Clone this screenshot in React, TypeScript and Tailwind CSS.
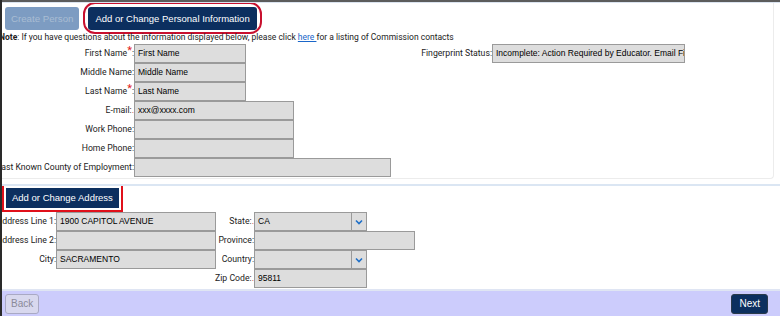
import React from 'react'

const labelFont = "font-['Roboto',sans-serif] text-[8.7px] text-[#222]"
const inputFont = "font-['Liberation_Sans',Arial,sans-serif] text-[8.5px] text-black"

function Req({ small }: { small?: boolean }) {
  if (small) return <span className="text-[#e02020] text-[9px] leading-none">.</span>
  return <span className="text-[#e02020] text-[11px] leading-none relative top-[-2px]">*</span>
}

function Field({
  value,
  width,
}: {
  value?: string
  width: string
}) {
  return (
    <div
      className={`${width} h-[19px] shrink-0 border border-[#9a9a9a] bg-[#dddddd] flex items-center px-[3px] overflow-hidden whitespace-nowrap ${inputFont}`}
    >
      {value}
    </div>
  )
}

function Select({ value }: { value?: string }) {
  return (
    <div className="w-[113px] h-[19px] shrink-0 border border-[#9a9a9a] bg-[#dddddd] flex items-stretch">
      <div className={`flex-1 flex items-center px-[3px] ${inputFont}`}>{value}</div>
      <div className="w-[15px] border-l border-[#9a9a9a] flex items-center justify-center">
        <svg width="8" height="6" viewBox="0 0 8 6">
          <path d="M1 1.5 L4 4.5 L7 1.5" fill="none" stroke="#1e6fc8" strokeWidth="1.6" />
        </svg>
      </div>
    </div>
  )
}

function Row({
  label,
  labelWidth,
  children,
  req,
}: {
  label: string
  labelWidth: string
  children: React.ReactNode
  req?: 'star' | 'dot'
}) {
  return (
    <div className="flex items-center h-[19px]">
      <div className={`${labelWidth} shrink-0 flex justify-end items-center whitespace-nowrap ${labelFont}`}>
        <span className="shrink-0">
          {label}
          {req === 'star' && <Req />}
          {req === 'dot' && <Req small />}
          {req !== 'dot' && ':'}
        </span>
      </div>
      {children}
    </div>
  )
}

export default function App() {
  return (
    <div className="w-[780px] h-[316px] bg-white border-l-2 border-[#2a2a2a] flex flex-col overflow-hidden">
      <div className="h-[2px] bg-[#5c5c5c] shrink-0" />
      <div className="h-[1px] bg-[#dbe4f0] shrink-0" />

      {/* personal info card */}
      <div className="w-[772px] h-[176px] shrink-0 border-r border-b border-[#ececec] rounded-br-[4px] overflow-hidden">
        <div className="flex items-center gap-[4px] pl-[3px] pt-[4px]">
          <button className="h-[23px] px-[6px] rounded-[3px] bg-[#7d9cc2] text-[#a9bcd3] font-['Liberation_Sans',Arial,sans-serif] text-[9.7px] leading-none">
            Create Person
          </button>
          <div className="flex rounded-[12px] border-2 border-[#c8102e] px-[3px] pt-[3px] pb-[2px] -mt-[5px] -mb-[4px]">
            <button className="h-[23px] px-[7px] rounded-[3px] bg-[#0c2f5f] text-white font-['Liberation_Sans',Arial,sans-serif] text-[9.5px] leading-none">
              Add or Change Personal Information
            </button>
          </div>
        </div>

        <div className="-ml-[3px] mt-[2px] whitespace-nowrap font-['Roboto',sans-serif] text-[8.5px] leading-[11px] text-[#222]">
          <b>Note</b>: If you have questions about the information displayed below, please click{' '}
          <span className="text-[#1a66c9] underline">here </span>for a listing of Commission contacts
        </div>

        <div className="flex mt-[1px]">
          <div className="flex flex-col">
            <Row label="First Name" labelWidth="w-[132px]" req="star">
              <Field width="w-[112px]" value="First Name" />
            </Row>
            <Row label="Middle Name" labelWidth="w-[132px]">
              <Field width="w-[112px]" value="Middle Name" />
            </Row>
            <Row label="Last Name" labelWidth="w-[132px]" req="star">
              <Field width="w-[112px]" value="Last Name" />
            </Row>
            <Row label="E-mail:" labelWidth="w-[132px]" req="dot">
              <Field width="w-[160px]" value="xxx@xxxx.com" />
            </Row>
            <Row label="Work Phone" labelWidth="w-[132px]">
              <Field width="w-[160px]" />
            </Row>
            <Row label="Home Phone" labelWidth="w-[132px]">
              <Field width="w-[160px]" />
            </Row>
            <Row label="Last Known County of Employment" labelWidth="w-[132px]">
              <Field width="w-[257px]" />
            </Row>
          </div>
          <div className="flex flex-col">
            <Row label="Fingerprint Status" labelWidth="w-[101px]">
              <Field width="w-[193px]" value="Incomplete: Action Required by Educator. Email Fingerprint Unit" />
            </Row>
          </div>
        </div>
      </div>

      <div className="h-[5px] shrink-0" />
      <div className="h-[2px] bg-[#dbe6f3] shrink-0" />

      {/* address section */}
      <div className="flex-1 flex flex-col overflow-hidden">
        <div className="flex -mt-[2px]">
          <div className="flex border-2 border-[#e0101a] p-[2px]">
            <button className="h-[20px] px-[6px] bg-[#0c2f5f] text-white font-['Liberation_Sans',Arial,sans-serif] text-[9.5px] leading-none">
              Add or Change Address
            </button>
          </div>
        </div>

        <div className="flex">
          <div className="flex flex-col">
            <Row label="Address Line 1" labelWidth="w-[54px]">
              <Field width="w-[160px]" value="1900 CAPITOL AVENUE" />
            </Row>
            <Row label="Address Line 2" labelWidth="w-[54px]">
              <Field width="w-[160px]" />
            </Row>
            <Row label="City" labelWidth="w-[54px]">
              <Field width="w-[160px]" value="SACRAMENTO" />
            </Row>
          </div>
          <div className="flex flex-col">
            <Row label="State:" labelWidth="w-[38px]" req="dot">
              <Select value="CA" />
            </Row>
            <Row label="Province" labelWidth="w-[38px]">
              <Field width="w-[161px]" />
            </Row>
            <Row label="Country" labelWidth="w-[38px]">
              <Select />
            </Row>
            <Row label="Zip Code:" labelWidth="w-[38px]" req="dot">
              <Field width="w-[113px]" value="95811" />
            </Row>
          </div>
        </div>

        <div className="mt-auto h-[2px] bg-[#dfe5f3] shrink-0" />
        <div className="h-[25px] shrink-0 bg-[#ccccfc] flex items-center justify-between pl-[3px] pr-[12px]">
          <button className="h-[20px] px-[5px] rounded-[3px] border border-[#a9a9c4] bg-[#d8d8ee] text-[#8a8a99] font-['Liberation_Sans',Arial,sans-serif] text-[10px] leading-none">
            Back
          </button>
          <button className="h-[20px] px-[7px] rounded-[3px] border border-[#2a3a4a] bg-[#0c2f5f] text-white font-['Liberation_Sans',Arial,sans-serif] text-[10px] leading-none">
            Next
          </button>
        </div>
      </div>
    </div>
  )
}
